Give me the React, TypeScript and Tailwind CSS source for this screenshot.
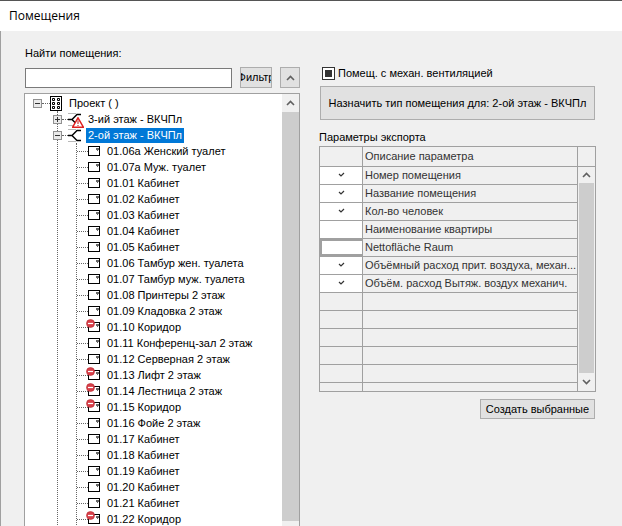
import React from 'react';

const rooms = [
  { name: '01.06а Женский туалет' },
  { name: '01.07а Муж. туалет' },
  { name: '01.01 Кабинет' },
  { name: '01.02 Кабинет' },
  { name: '01.03 Кабинет' },
  { name: '01.04 Кабинет' },
  { name: '01.05 Кабинет' },
  { name: '01.06 Тамбур жен. туалета' },
  { name: '01.07 Тамбур муж. туалета' },
  { name: '01.08 Принтеры 2 этаж' },
  { name: '01.09 Кладовка 2 этаж' },
  { name: '01.10 Коридор', error: true },
  { name: '01.11 Конференц-зал 2 этаж' },
  { name: '01.12 Серверная 2 этаж' },
  { name: '01.13 Лифт 2 этаж', error: true },
  { name: '01.14 Лестница 2 этаж', error: true },
  { name: '01.15 Коридор', error: true },
  { name: '01.16 Фойе 2 этаж' },
  { name: '01.17 Кабинет' },
  { name: '01.18 Кабинет' },
  { name: '01.19 Кабинет' },
  { name: '01.20 Кабинет' },
  { name: '01.21 Кабинет' },
  { name: '01.22 Коридор', error: true },
];

const params = [
  { name: 'Номер помещения', checked: true },
  { name: 'Название помещения', checked: true },
  { name: 'Кол-во человек', checked: true },
  { name: 'Наименование квартиры' },
  { name: 'Nettofläche Raum', focused: true },
  { name: 'Объёмный расход прит. воздуха, механ...', checked: true },
  { name: 'Объём. расход Вытяж. воздух механич.', checked: true },
];

const Chevron = ({ down }: { down?: boolean }) => (
  <svg width="9" height="6" viewBox="0 0 9 6" className={down ? 'rotate-180' : ''}>
    <path d="M1 5L4.5 1.5L8 5" fill="none" stroke="#606060" strokeWidth="1.6" />
  </svg>
);

const Expander = ({ open }: { open?: boolean }) => (
  <div className="relative z-10 flex h-[9px] w-[9px] shrink-0 items-center justify-center border border-[#919191] bg-[#eaeaea]">
    <svg width="7" height="7" viewBox="0 0 7 7">
      <path d={open ? 'M1 3.5H6' : 'M1 3.5H6M3.5 1V6'} stroke="#333" strokeWidth="1" />
    </svg>
  </div>
);

const FloorIcon = ({ warn }: { warn?: boolean }) => (
  <div className="relative h-[16px] w-[16px] shrink-0">
    <svg width="16" height="16" viewBox="0 0 16 16">
      <path d="M0 2.5H8M0 14.5H8" stroke="#b8b8b8" />
      <path d="M0 8.5H4L9 3.5H13M4 8.5L9 13.5H13" fill="none" stroke="#000" strokeWidth="1.4" />
    </svg>
    {warn && (
      <svg width="12" height="11" viewBox="0 0 12 11" className="absolute left-[4px] top-[6px]">
        <path d="M6 0.8L11.4 10.2H0.6Z" fill="#fff" stroke="#e02020" strokeWidth="1.5" />
        <path d="M6 3.5V7M6 8V9" stroke="#c01010" strokeWidth="1" />
      </svg>
    )}
  </div>
);

const ProjectIcon = () => (
  <svg width="12" height="15" viewBox="0 0 12 15" className="shrink-0">
    <rect x="0.5" y="0.5" width="11" height="14" fill="#fff" stroke="#000" />
    <path
      d="M2.5 2.5h2v2h-2zM7.5 2.5h2v2h-2zM2.5 6.5h2v2h-2zM7.5 6.5h2v2h-2zM2.5 10.5h2v2h-2zM7.5 10.5h2v2h-2z"
      fill="#fff"
      stroke="#000"
    />
  </svg>
);

const RoomIcon = ({ error }: { error?: boolean }) => (
  <div className="relative h-[12px] w-[13px] shrink-0">
    <svg width="13" height="12" viewBox="0 0 13 12">
      <rect x="0.5" y="1.5" width="11" height="9" fill="#fff" stroke="#000" />
      <path d="M8 3H11V5H10V6H9V5H8Z" fill="#666" />
    </svg>
    {error && (
      <svg width="9" height="9" viewBox="0 0 9 9" className="absolute -left-[2px] -top-[2px]">
        <circle cx="4.5" cy="4.5" r="4" fill="#d8404a" stroke="#b52a30" strokeWidth="0.6" />
        <path d="M2 4.5H7" stroke="#fff" strokeWidth="1.2" />
      </svg>
    )}
  </div>
);

const App: React.FC = () => {
  return (
    <div
      className="flex h-[526px] w-[622px] flex-col overflow-hidden border-t border-[#555] bg-[#f0f0f0] text-[11px] text-black"
      style={{ fontFamily: '"Liberation Sans", sans-serif' }}
    >
      {/* Title */}
      <div
        className="flex h-[30px] shrink-0 items-center bg-white pl-[9px] text-[12px]"
        style={{ fontFamily: '"Open Sans", sans-serif' }}
      >
        Помещения
      </div>

      <div className="flex min-h-0 flex-1 border-l border-[#a0a0a0]">
        {/* Left side */}
        <div className="ml-[23px] flex w-[276px] shrink-0 flex-col">
          <div className="mt-[16px] h-[13px] pl-[1px] leading-[13px]">Найти помещения:</div>
          <div className="mt-[7px] flex h-[21px] items-end">
            <div className="ml-[1px] h-[20px] w-[207px] border border-[#7a7a7a] bg-white" />
            <div className="ml-[8px] flex h-[21px] w-[32px] items-center justify-center overflow-hidden whitespace-nowrap border border-[#adadad] bg-[#e1e1e1]">
              Фильтр
            </div>
            <div className="ml-[8px] flex h-[21px] w-[20px] items-center justify-center border border-[#adadad] bg-[#e1e1e1]">
              <Chevron />
            </div>
          </div>
          <div className="mt-[5px] flex min-h-0 flex-1 border-l border-r border-t border-[#a0a0a0] bg-white">
            <div className="min-w-0 flex-1 overflow-hidden pl-[8px] pt-[1px]">
              <div className="flex h-[16px] items-center">
                <Expander open />
                <div className="w-[8px] border-t border-dotted border-[#666]" />
                <ProjectIcon />
                <span className="ml-[7px]">Проект ( )</span>
              </div>
              <div className="ml-[24px] border-l border-dotted border-[#666]">
                <div className="-ml-[5px] flex h-[16px] items-center">
                  <Expander />
                  <div className="w-[6px] border-t border-dotted border-[#666]" />
                  <FloorIcon warn />
                  <span className="ml-[4px]">3-ий этаж - ВКЧПл</span>
                </div>
                <div className="-ml-[5px] flex h-[16px] items-center">
                  <Expander open />
                  <div className="w-[6px] border-t border-dotted border-[#666]" />
                  <FloorIcon />
                  <span className="ml-[2px] bg-[#0078d7] px-[2px] leading-[15px] text-white">2-ой этаж - ВКЧПл</span>
                </div>
                <div className="ml-[18px] border-l border-dotted border-[#666]">
                  {rooms.map((room) => (
                    <div key={room.name} className="flex h-[16px] items-center">
                      <div className="w-[11px] border-t border-dotted border-[#666]" />
                      <RoomIcon error={room.error} />
                      <span className="ml-[6px] whitespace-nowrap">{room.name}</span>
                    </div>
                  ))}
                </div>
              </div>
            </div>
            {/* Tree scrollbar */}
            <div className="flex w-[17px] shrink-0 flex-col bg-[#f0f0f0]">
              <div className="flex h-[18px] shrink-0 items-center justify-center">
                <Chevron />
              </div>
              <div className="h-[409px] shrink-0 bg-[#cdcdcd]" />
            </div>
          </div>
        </div>

        {/* Right side */}
        <div className="ml-[20px] flex w-[275px] shrink-0 flex-col">
          <div className="mt-[35px] flex h-[14px] items-center pl-[2px]">
            <div className="flex h-[13px] w-[13px] items-center justify-center border border-[#333] bg-white">
              <div className="h-[7px] w-[7px] bg-[#333]" />
            </div>
            <span className="ml-[3px]">Помещ. с механ. вентиляцией</span>
          </div>
          <div className="mt-[6px] flex h-[34px] items-center justify-center border border-[#adadad] bg-[#e1e1e1]">
            Назначить тип помещения для: 2-ой этаж - ВКЧПл
          </div>
          <div className="-ml-[1px] mt-[11px] h-[13px] leading-[13px]">Параметры экспорта</div>
          <div className="-mx-[1px] mt-[2px] flex h-[246px] overflow-hidden border border-[#a0a0a0] text-[#333]">
            <div className="flex min-w-0 flex-1 flex-col">
              <div className="flex h-[20px] shrink-0 border-b border-[#a0a0a0]">
                <div className="w-[43px] border-r border-[#a0a0a0]" />
                <div className="flex-1 pl-[2px] leading-[19px]">Описание параметра</div>
              </div>
              {Array.from({ length: 13 }).map((_, i) => {
                const p = params[i];
                return (
                  <div key={i} className="flex h-[18px] shrink-0 border-b border-[#a0a0a0]">
                    <div
                      className={`flex w-[43px] items-start justify-center border-r border-[#a0a0a0] pt-[5px] ${
                        p ? 'bg-white' : ''
                      } ${p?.focused ? 'border-2 border-[#a0a0a0]' : ''}`}
                    >
                      {p?.checked && (
                        <svg width="7" height="6" viewBox="0 0 7 6">
                          <path d="M1 2L3 4L6 1" fill="none" stroke="#333" strokeWidth="1.2" />
                        </svg>
                      )}
                    </div>
                    <div className="flex-1 whitespace-nowrap pl-[2px] leading-[17px]">{p?.name}</div>
                  </div>
                );
              })}
            </div>
            {/* Table scrollbar */}
            <div className="flex w-[18px] shrink-0 flex-col border-l border-[#a0a0a0]">
              <div className="h-[20px] shrink-0 border-b border-[#a0a0a0]" />
              <div className="flex h-[16px] shrink-0 items-center justify-center">
                <Chevron />
              </div>
              <div className="mx-px flex-1 bg-[#cdcdcd]" />
              <div className="flex h-[18px] shrink-0 items-center justify-center">
                <Chevron down />
              </div>
            </div>
          </div>
          <div className="mt-[7px] flex justify-end">
            <div className="flex h-[20px] w-[115px] items-center justify-center border border-[#adadad] bg-[#e1e1e1]">
              Создать выбранные
            </div>
          </div>
        </div>
      </div>
    </div>
  );
};

export default App;
